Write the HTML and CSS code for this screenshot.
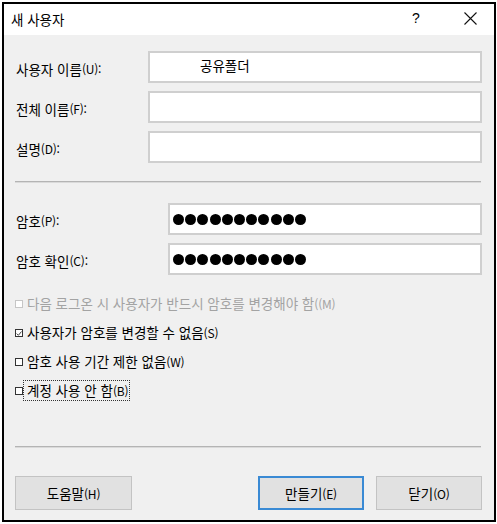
FILE: index.html
```html
<!DOCTYPE html>
<html lang="ko">
<head>
<meta charset="utf-8">
<title>새 사용자</title>
<link rel="stylesheet" href="styles.css">
</head>
<body>
<div class="window">
  <div class="titlebar">
    <span class="title">새 사용자</span>
    <span class="help">?</span>
    <span class="close"><svg width="13" height="13" viewBox="0 0 13 13"><path d="M0.5 0.5 L12.5 12.5 M12.5 0.5 L0.5 12.5" stroke="#111" stroke-width="1.1" fill="none"/></svg></span>
  </div>
  <div class="content">
    <div class="form form-user">
      <label class="lbl">사용자 이름<span class="acc">(U):</span></label>
      <div class="input"><span class="value">공유폴더</span></div>
      <label class="lbl">전체 이름<span class="acc">(F):</span></label>
      <div class="input"></div>
      <label class="lbl">설명<span class="acc">(D):</span></label>
      <div class="input"></div>
    </div>
    <div class="sep"></div>
    <div class="form form-pw">
      <label class="lbl">암호<span class="acc">(P):</span></label>
      <div class="input pw"><span class="dot"></span><span class="dot"></span><span class="dot"></span><span class="dot"></span><span class="dot"></span><span class="dot"></span><span class="dot"></span><span class="dot"></span><span class="dot"></span><span class="dot"></span><span class="dot"></span></div>
      <label class="lbl">암호 확인<span class="acc">(C):</span></label>
      <div class="input pw"><span class="dot"></span><span class="dot"></span><span class="dot"></span><span class="dot"></span><span class="dot"></span><span class="dot"></span><span class="dot"></span><span class="dot"></span><span class="dot"></span><span class="dot"></span><span class="dot"></span></div>
    </div>
    <div class="checks">
      <div class="check disabled"><span class="box"></span><span class="ctext">다음 로그온 시 사용자가 반드시 암호를 변경해야 함<span class="acc">((M)</span></span></div>
      <div class="check"><span class="box"><svg width="7" height="7" viewBox="0 0 7 7"><path d="M0.8 3.6 L2.8 5.6 L6.4 1.2" stroke="#222" stroke-width="1" fill="none"/></svg></span><span class="ctext">사용자가 암호를 변경할 수 없음<span class="acc">(S)</span></span></div>
      <div class="check"><span class="box"></span><span class="ctext">암호 사용 기간 제한 없음<span class="acc">(W)</span></span></div>
      <div class="check"><span class="box"></span><span class="ctext focus">계정 사용 안 함<span class="acc">(B)</span></span></div>
    </div>
    <div class="sep sep2"></div>
    <div class="buttons">
      <button class="btn btn-help">도움말<span class="acc">(H)</span></button>
      <button class="btn btn-default">만들기<span class="acc">(E)</span></button>
      <button class="btn">닫기<span class="acc">(O)</span></button>
    </div>
  </div>
</div>
</body>
</html>
```
FILE: styles.css
```css
* { box-sizing: border-box; }
html, body {
  margin: 0;
  padding: 0;
  background: #ffffff;
}
body {
  font-family: "Noto Sans CJK KR", "Malgun Gothic", sans-serif;
  font-size: 13.5px;
  color: #000;
}
.window {
  margin: 2px;
  width: 494px;
  height: 520px;
  border: 2px solid #000;
  display: flex;
  flex-direction: column;
  background: #f0f0f0;
}
.titlebar {
  height: 31px;
  flex: none;
  background: #fff;
  display: flex;
  align-items: center;
  padding-left: 7px;
}
.title {
  flex: 1;
  line-height: 18px;
  padding-bottom: 2px;
}
.help {
  font-family: "Liberation Sans", sans-serif;
  font-size: 14px;
  width: 12px;
  margin-right: 40px;
  padding-bottom: 3px;
}
.close {
  width: 13px;
  height: 13px;
  margin-right: 17px;
  margin-bottom: 3px;
  display: flex;
}
.content {
  flex: 1;
  display: flex;
  flex-direction: column;
  padding: 0 12px 0 11px;
}
.acc {
  font-size: 12px;
  letter-spacing: -0.2px;
}
.form {
  display: grid;
  grid-auto-rows: 32px;
  row-gap: 8px;
}
.form-user {
  margin-top: 16px;
  grid-template-columns: 133px 1fr;
}
.form-pw {
  margin-top: 20px;
  grid-template-columns: 153px 1fr;
}
.lbl {
  display: flex;
  align-items: center;
  padding-left: 1px;
  padding-top: 3px;
  white-space: nowrap;
}
.input {
  background: #fff;
  border: 2px solid #cfcfcf;
  display: flex;
  align-items: flex-start;
}
.value {
  padding-left: 50px;
  padding-top: 3px;
  line-height: 18px;
}
.pw {
  align-items: center;
  padding-left: 3px;
  gap: 1.2px;
}
.dot {
  width: 11px;
  height: 11px;
  border-radius: 50%;
  background: #000;
  flex: none;
}
.sep {
  margin-top: 18px;
  height: 2px;
  border-top: 1px solid #b4b4b4;
  border-bottom: 1px solid #dadada;
  margin-right: 1px;
}
.checks {
  margin-top: 14px;
  display: flex;
  flex-direction: column;
}
.check {
  height: 29px;
  display: flex;
  align-items: center;
  white-space: nowrap;
}
.box {
  width: 8px;
  height: 8px;
  border: 1px solid #333;
  background: #fff;
  margin-left: 0;
  margin-top: 1px;
  display: flex;
  align-items: center;
  justify-content: center;
  flex: none;
}
.ctext {
  margin-left: 0;
  padding: 0 1px 0 3px;
  border: 1px dotted transparent;
  line-height: 18px;
}
.ctext.focus {
  border-color: #333;
}
.disabled {
  color: #a3a3a3;
}
.disabled .box {
  border-color: #c6c6c6;
}
.sep2 {
  margin-top: 41px;
}
.buttons {
  margin-top: 28px;
  display: flex;
  gap: 12px;
}
.btn {
  height: 34px;
  width: 106px;
  background: #e1e1e1;
  border: 1px solid #c3c3c3;
  font: inherit;
  color: #000;
  padding: 0;
}
.btn-help {
  width: 117px;
  margin-right: auto;
}
.btn-default {
  border: 2px solid #3a8ad4;
}
```
